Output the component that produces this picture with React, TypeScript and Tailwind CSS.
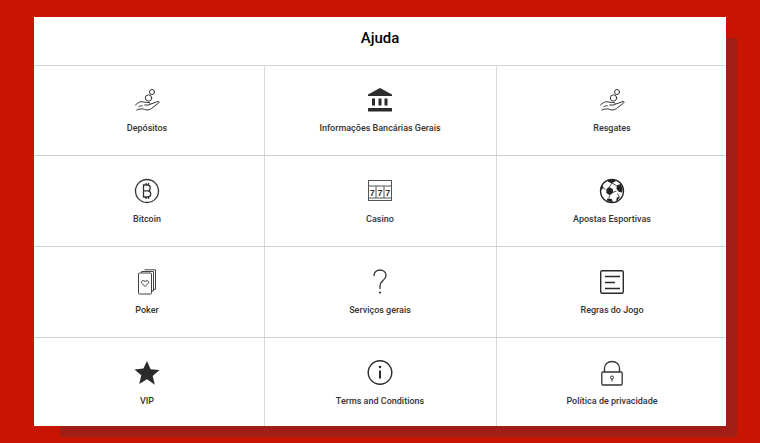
const HandCoins = () => (
  <svg width="32" height="32" viewBox="0 0 32 32" fill="none" stroke="#333" strokeWidth="1" strokeLinecap="round" strokeLinejoin="round">
    <circle cx="21" cy="8" r="2.500" />
    <circle cx="17.500" cy="14" r="3.200" />
    <path d="M4.500 21c2-1.800 3.800-3.300 6-3.300 2 0 3 .8 5 .8h2.500c1.200 0 1.200 2.500-.2 2.500h-4" />
    <path d="M7.800 22.800c1-.8 2-1.200 3.500-1" />
    <path d="M18.500 20.500l8.500-3c1.200-.3 1.500.8.700 1.400l-7.200 5.600c-2.300 1.700-4.800 1.800-7 .9-2.500-1-4.500-.5-7.700.6" />
  </svg>
);

const Bank = () => (
  <svg width="32" height="32" viewBox="0 0 32 32" fill="#2b2b2b">
    <path d="M16 4l12 6.500V12H4v-1.500z" />
    <rect x="8" y="14.500" width="3" height="7" />
    <rect x="14.500" y="14.500" width="3" height="7" />
    <rect x="20.500" y="14.500" width="3" height="7" />
    <rect x="4" y="24" width="24" height="3.500" rx="0.500" />
  </svg>
);

const BitcoinIcon = () => (
  <svg width="32" height="32" viewBox="0 0 32 32" fill="none" stroke="#333" strokeWidth="1.300">
    <circle cx="16" cy="16" r="11.500" />
    <path d="M12.500 10h4.300c3.200 0 3.200 5.800 0 5.800 3.800 0 3.800 6.200 0 6.200h-4.300zM12.500 15.800h4.300M15 8v2M17.500 8v2M15 22v2M17.500 22v2" />
  </svg>
);

const Slots = () => (
  <svg width="32" height="32" viewBox="0 0 32 32" fill="none" stroke="#555" strokeWidth="1">
    <rect x="4.500" y="5.500" width="23" height="20" />
    <path d="M4.500 11h23M4.500 23h23" />
    <path d="M12 11v12M20 11v12" />
    <text x="8.300" y="20.500" fontFamily="'Liberation Sans', sans-serif" fontSize="9" fontWeight="700" fill="#333" stroke="none" textAnchor="middle">7</text>
    <text x="16" y="20.500" fontFamily="'Liberation Sans', sans-serif" fontSize="9" fontWeight="700" fill="#333" stroke="none" textAnchor="middle">7</text>
    <text x="23.800" y="20.500" fontFamily="'Liberation Sans', sans-serif" fontSize="9" fontWeight="700" fill="#333" stroke="none" textAnchor="middle">7</text>
  </svg>
);

const Ball = () => (
  <svg width="32" height="32" viewBox="0 0 32 32" fill="none" stroke="#222" strokeWidth="0.800">
    <circle cx="16" cy="16" r="11.500" strokeWidth="1.400" />
    <path d="M16 8l-3 4.500M16 8l5 3M9.500 14.500L6 12M16.500 17.500l4-1.500M13.500 20.500l-.5 3M21.500 18.500l1.500 3" />
    <path fill="#222" stroke="none" d="M13 12l3.800 2 .3 3.800-3.300 2.400-3.500-2.200.2-4z" />
    <path fill="#222" stroke="none" d="M21.200 10.300l3.500-1.300 2 5-.7 3.500-3.300-.7-2.400-3.300z" />
    <path fill="#222" stroke="none" d="M11.500 4.800l7-.4 1 2-4 1.800-3.500-1.500z" />
    <path fill="#222" stroke="none" d="M11.500 23.500l4.300.4 1 3-3-.2-3.300-1.500z" />
    <path fill="#222" stroke="none" d="M21 22.300l3.200-.8-2.700 3.900-1.500.4z" />
    <path fill="#222" stroke="none" d="M4.800 13l1.700-2.500 1 2-2.500 3z" />
  </svg>
);

const Cards = () => (
  <svg width="32" height="32" viewBox="0 0 32 32" fill="none" stroke="#444" strokeWidth="1" strokeLinejoin="round">
    <path d="M10.500 6.800V5.500h12v19.500h-2" />
    <path d="M13.500 3.800h11v19.500h-2" />
    <rect x="7.500" y="7" width="13" height="21" rx="1" />
    <path d="M14 20.500l-3.200-3.300c-1.400-1.600.9-3.900 3.200-1.700 2.300-2.200 4.600.1 3.200 1.700z" />
  </svg>
);

const Question = () => (
  <svg width="32" height="32" viewBox="0 0 32 32" fill="none" stroke="#333" strokeWidth="1.300" strokeLinecap="round">
    <path d="M10 9.500C10 6 12.700 4 16 4c3.500 0 6 2.300 6 5.500 0 2.600-1.500 3.900-3.200 5.300-1.900 1.500-2.800 3-2.800 5.700v2" />
    <circle cx="16" cy="26.500" r="1.100" fill="#333" stroke="none" />
  </svg>
);

const Rules = () => (
  <svg width="32" height="32" viewBox="0 0 32 32" fill="none" stroke="#2b2b2b" strokeWidth="1.400">
    <rect x="4.700" y="4.700" width="22.600" height="22.600" rx="1.500" />
    <path d="M9 10.500h15M9 16.500h10M9 22.500h15" />
  </svg>
);

const Star = () => (
  <svg width="32" height="32" viewBox="0 0 32 32" fill="#2b2b2b">
    <path d="M16 4l3.600 8.300 8.900.8-6.800 5.800 2.100 8.800L16 22.300 8.200 27l2.100-8.800-6.800-5.800 8.900-.8z" />
  </svg>
);

const Info = () => (
  <svg width="32" height="32" viewBox="0 0 32 32" fill="none" stroke="#2b2b2b" strokeWidth="1.400">
    <circle cx="16" cy="15.500" r="11.800" />
    <path d="M16 13.500v8" strokeWidth="2" />
    <circle cx="16" cy="10" r="1.300" fill="#2b2b2b" stroke="none" />
  </svg>
);

const Lock = () => (
  <svg width="32" height="32" viewBox="0 0 32 32" fill="none" stroke="#333" strokeWidth="1.300">
    <rect x="5.800" y="15" width="20.400" height="13" rx="1.200" />
    <path d="M8.500 15v-3.500C8.500 7 12 4.500 16 4.500s7.500 2.500 7.500 7V15" />
    <circle cx="16" cy="20.500" r="1.500" strokeWidth="1" />
    <path d="M16 22v2.500" strokeWidth="1" />
  </svg>
);

const rows = [
  { cls: 'h-[90px] border-b', pad: 'pt-[18px]', gap: 'mt-[5px]', items: [['Depósitos', HandCoins], ['Informações Bancárias Gerais', Bank], ['Resgates', HandCoins]] },
  { cls: 'h-[91px] border-b', pad: 'pt-[19px]', gap: 'mt-[5px]', items: [['Bitcoin', BitcoinIcon], ['Casino', Slots], ['Apostas Esportivas', Ball]] },
  { cls: 'h-[91px] border-b', pad: 'pt-[19px]', gap: 'mt-[5px]', items: [['Poker', Cards], ['Serviços gerais', Question], ['Regras do Jogo', Rules]] },
  { cls: 'h-[88px]', pad: 'pt-[19px]', gap: 'mt-[5px]', items: [['VIP', Star], ['Terms and Conditions', Info], ['Política de privacidade', Lock]] },
] as const;

const colWidths = ['w-[231px] border-r pr-[4px]', 'w-[232px] border-r pr-[1px]', 'w-[229px] pl-[1px]'];

export default function App() {
  return (
    <div className="w-[760px] h-[443px] overflow-hidden bg-[#c81502] pt-[17px] pl-[34px] font-['Roboto',sans-serif]">
      <div className="relative w-[692px] h-[409px] z-0">
        {/* hard shadow behind the card */}
        <div className="absolute left-[26px] top-[21px] w-[677px] h-[399px] bg-[#a11e17] -z-10" />
        <div className="bg-white h-full">
          <div className="h-[49px] pb-[6px] border-b border-[#d4d4d4] flex items-center justify-center">
            <h1 className="text-[15px] font-medium text-black leading-none">Ajuda</h1>
          </div>
          {rows.map((row, i) => (
            <div key={i} className={`flex border-[#cfcfcf] ${row.cls}`}>
              {row.items.map(([label, Icon], j) => (
                <div key={label} className={`flex flex-col items-center border-[#d9d9d9] ${row.pad} ${colWidths[j]}`}>
                  <Icon />
                  <span className={`text-[9px] leading-[14px] font-medium text-[#333] ${row.gap}`}>{label}</span>
                </div>
              ))}
            </div>
          ))}
        </div>
      </div>
    </div>
  );
}
